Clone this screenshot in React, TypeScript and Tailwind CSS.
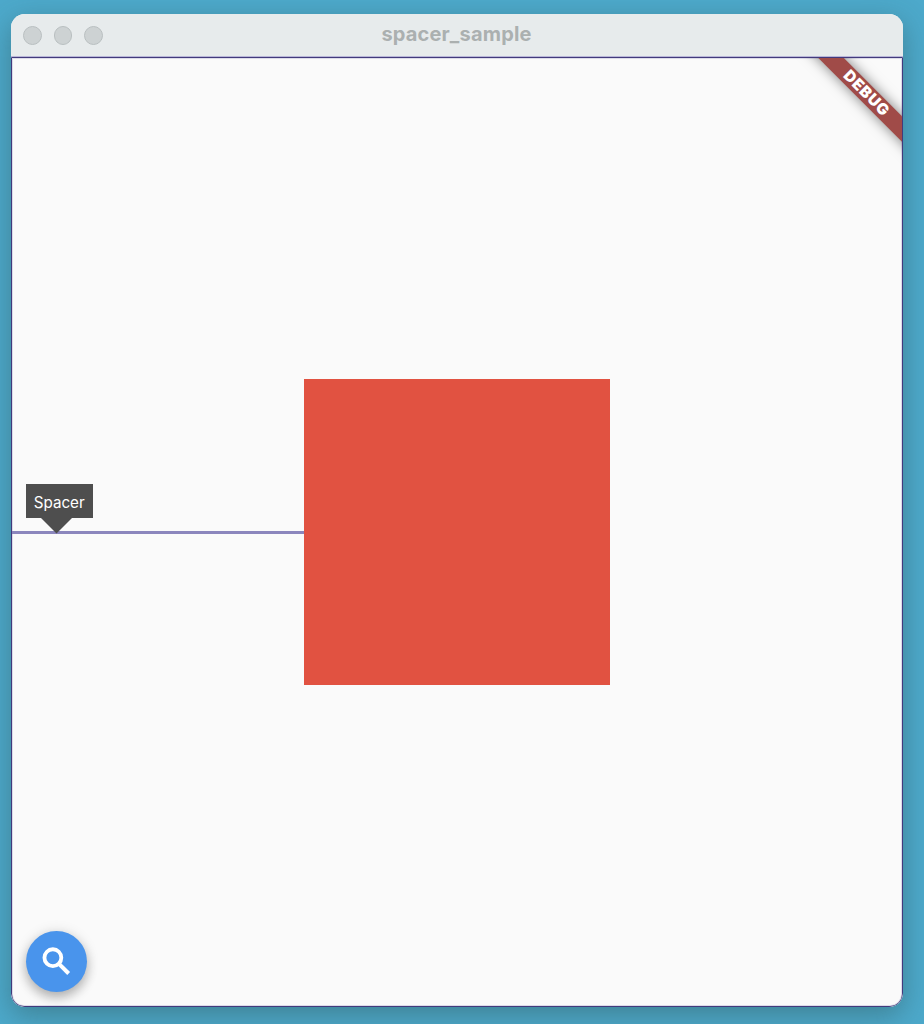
import React from "react";

function TitleBar() {
  return (
    <header className="relative flex h-[42px] shrink-0 items-center justify-center bg-[#e7ebec]">
      <div className="absolute left-3 top-3 flex gap-3">
        {[0, 1, 2].map((i) => (
          <span key={i} className="size-[18.6px] rounded-full border border-[#b9bfc0] bg-[#cdd2d3]" />
        ))}
      </div>
      <h1 className="pr-px pb-0.5 font-['Inter',sans-serif] text-[20px] leading-none font-bold tracking-[0.17px] text-[#abb0b0]">
        spacer_sample
      </h1>
    </header>
  );
}

function DebugBanner() {
  return (
    <div className="absolute top-0 right-0 size-[120px] overflow-hidden">
      <div className="absolute top-[26.3px] left-[-16px] flex h-[18.4px] w-[200px] rotate-45 items-center justify-center bg-[#a04b48] shadow-[0_0_13px_rgba(0,0,0,0.5)]">
        <span className="pl-px font-['Inter',sans-serif] text-[15.5px] leading-none font-black tracking-[0.8px] text-white">
          DEBUG
        </span>
      </div>
    </div>
  );
}

function Tooltip() {
  return (
    <div className="absolute top-[426px] left-3.5 flex w-[67.4px] flex-col">
      <div className="flex h-[34px] items-center justify-center bg-[#4e4e4e] pt-[3px] pr-px font-['Inter',sans-serif] text-[15.2px] leading-none text-white">
        Spacer
      </div>
      <div className="ml-[15px] h-[15.5px] w-[31px] bg-[#4e4e4e] [clip-path:polygon(0_0,100%_0,50%_100%)]" />
    </div>
  );
}

function SearchIcon() {
  return (
    <svg viewBox="0 0 24 24" className="size-[36.8px]" fill="none" stroke="currentColor">
      <circle cx="9.7" cy="9.6" r="5.5" strokeWidth="2.5" />
      <path d="M13.7 13.6 20 19.9" strokeWidth="2.6" />
    </svg>
  );
}

export default function App() {
  return (
    <main className="h-[1024px] w-[924px] overflow-hidden bg-[#4da9cb] pt-3.5 pl-[11px]">
      <section className="flex h-[993px] w-[892px] flex-col overflow-hidden rounded-[14px] bg-[#fafafa] shadow-[0_8px_28px_rgba(45,80,80,0.45)]">
        <TitleBar />
        <div className="h-px shrink-0 bg-[#b9b6d8]" />
        <div className="relative flex min-h-0 flex-1 rounded-b-[13px] border border-[#423a7c] bg-[#fafafa] shadow-[inset_0_0_0_1px_#dcdbe9]">
          <div className="flex w-[291.5px] shrink-0 items-center">
            <div className="h-[3px] w-full bg-[#8b86bd]" />
          </div>
          <div className="size-[306.5px] shrink-0 self-center bg-[#e15241]" />
          <Tooltip />
          <button
            aria-label="Select widget"
            className="absolute bottom-[14px] left-3.5 flex size-[61.2px] items-center justify-center rounded-full bg-[#4994ec] text-white shadow-[0_6px_11px_rgba(0,0,0,0.24),0_1px_14px_rgba(0,0,0,0.12)]"
          >
            <SearchIcon />
          </button>
          <DebugBanner />
        </div>
      </section>
    </main>
  );
}
